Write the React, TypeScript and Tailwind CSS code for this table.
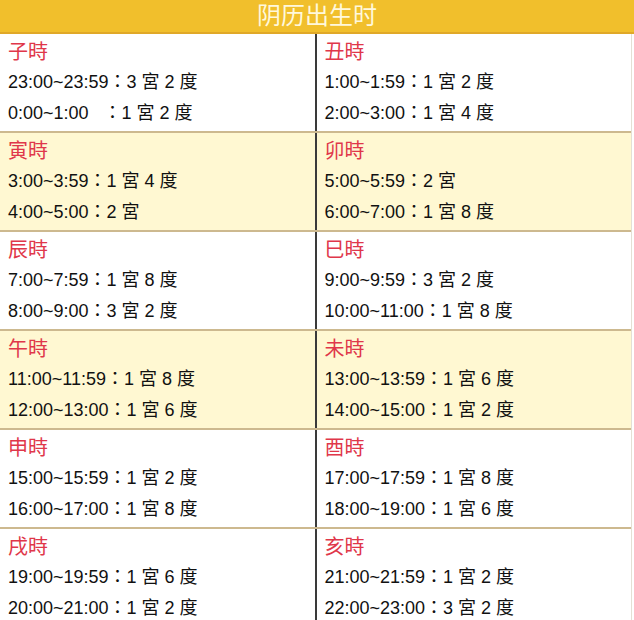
const rows: Array<Array<{ name: string; lines: string[] }>> = [
  [
    { name: "子時", lines: ["23:00~23:59：3 宮 2 度", "0:00~1:00\u00a0\u00a0 ：1 宮 2 度"] },
    { name: "丑時", lines: ["1:00~1:59：1 宮 2 度", "2:00~3:00：1 宮 4 度"] },
  ],
  [
    { name: "寅時", lines: ["3:00~3:59：1 宮 4 度", "4:00~5:00：2 宮"] },
    { name: "卯時", lines: ["5:00~5:59：2 宮", "6:00~7:00：1 宮 8 度"] },
  ],
  [
    { name: "辰時", lines: ["7:00~7:59：1 宮 8 度", "8:00~9:00：3 宮 2 度"] },
    { name: "巳時", lines: ["9:00~9:59：3 宮 2 度", "10:00~11:00：1 宮 8 度"] },
  ],
  [
    { name: "午時", lines: ["11:00~11:59：1 宮 8 度", "12:00~13:00：1 宮 6 度"] },
    { name: "未時", lines: ["13:00~13:59：1 宮 6 度", "14:00~15:00：1 宮 2 度"] },
  ],
  [
    { name: "申時", lines: ["15:00~15:59：1 宮 2 度", "16:00~17:00：1 宮 8 度"] },
    { name: "酉時", lines: ["17:00~17:59：1 宮 8 度", "18:00~19:00：1 宮 6 度"] },
  ],
  [
    { name: "戌時", lines: ["19:00~19:59：1 宮 6 度", "20:00~21:00：1 宮 2 度"] },
    { name: "亥時", lines: ["21:00~21:59：1 宮 2 度", "22:00~23:00：3 宮 2 度"] },
  ],
];

function Cell({ name, lines }: { name: string; lines: string[] }) {
  return (
    <div className="flex-1 pl-2 pt-[3px]">
      <div className="h-[30px] leading-[30px] text-[20px] text-[#e0374a]">{name}</div>
      {lines.map((l) => (
        <div key={l} className="h-[31px] leading-[31px] text-[18px] text-[#111111] whitespace-pre">
          {l}
        </div>
      ))}
    </div>
  );
}

function Row({ row, shaded, last }: { row: Array<{ name: string; lines: string[] }>; shaded: boolean; last?: boolean }) {
  return (
    <div
      className={
        shaded
          ? "flex h-[99px] border-b-2 border-[#cdb98f] bg-[#fff8d2]"
          : last
            ? "flex h-[99px] bg-white"
            : "flex h-[99px] border-b-2 border-[#cdb98f] bg-white"
      }
    >
      <Cell {...row[0]} />
      <div className="w-[2px] bg-[#3a3a3a]" />
      <Cell {...row[1]} />
    </div>
  );
}

export default function App() {
  return (
    <div
      className="w-[634px] h-[620px] overflow-hidden bg-white"
      style={{ fontFamily: '"Liberation Sans", "Noto Sans CJK TC", sans-serif' }}
    >
      {/* Header */}
      <div className="h-[34px] bg-[#f1bf2c] border-b-2 border-[#e0a828] flex items-center justify-center">
        <span className="text-[24px] leading-none text-[#fff8dc]">阴历出生时</span>
      </div>

      <div className="border-r border-[#e4e0d4] w-[632px]">
        <Row row={rows[0]} shaded={false} />
        <Row row={rows[1]} shaded />
        <Row row={rows[2]} shaded={false} />
        <Row row={rows[3]} shaded />
        <Row row={rows[4]} shaded={false} />
        <Row row={rows[5]} shaded={false} last />
      </div>
    </div>
  );
}
